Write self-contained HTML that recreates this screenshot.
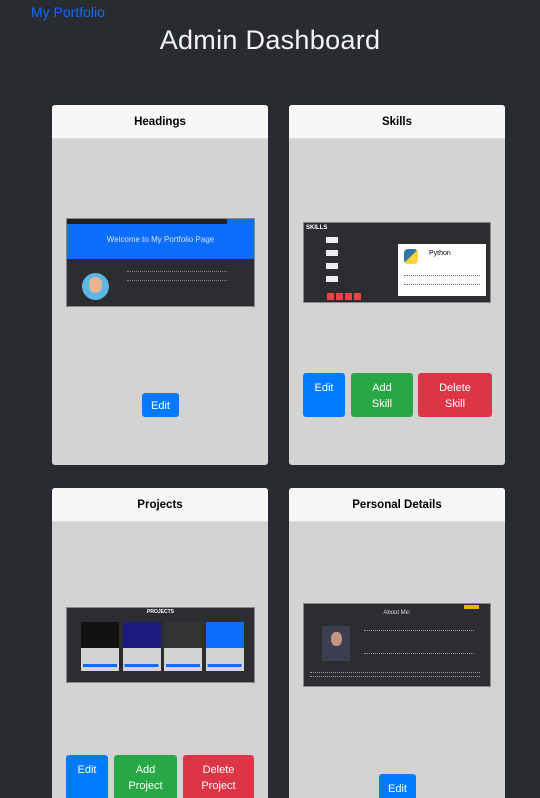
<!DOCTYPE html>
<html><head><style>
*{margin:0;padding:0;box-sizing:border-box}
html,body{width:540px;height:798px;overflow:hidden}
body{background:#282b30;font-family:"Liberation Sans",sans-serif;position:relative}
.a{position:absolute}
.brand{left:31px;top:4px;color:#0d6efd;font-size:14px}
h1{position:absolute;left:0;width:540px;text-align:center;top:25px;color:#f4f4f4;font-size:27px;font-weight:normal;letter-spacing:0.3px}
.card{position:absolute;background:#d3d3d3;border-radius:3px;overflow:hidden}
.hd{height:34px;background:#f7f7f7;border-bottom:1px solid #ddd;text-align:center;font-size:11.5px;font-weight:bold;line-height:35px;color:#000}
.btn{position:absolute;color:#fff;font-size:11px;text-align:center;border-radius:3px;line-height:16px;padding-top:7px}
.b{background:#007bff}.g{background:#28a745}.r{background:#dc3545}
.shot{position:absolute;background:#2b2d31;border:1px solid #888}
</style></head><body>
<div class="a brand">My Portfolio</div>
<h1>Admin Dashboard</h1>

<div class="card" style="left:52px;top:105px;width:216px;height:360px"><div class="hd">Headings</div></div>
<div class="shot" style="left:66px;top:218px;width:189px;height:89px">
 <div class="a" style="left:0;top:0;width:187px;height:5px;background:#222"></div>
 <div class="a" style="left:160px;top:0;width:27px;height:5px;background:#0d6efd"></div>
 <div class="a" style="left:0;top:5px;width:187px;height:35px;background:#0d6efd;color:#cfe0ff;font-size:8px;text-align:center;padding-top:11px">Welcome to My Portfolio Page</div>
 <div class="a" style="left:15px;top:54px;width:27px;height:27px;border-radius:50%;background:#5bb8e6"></div>
 <div class="a" style="left:22px;top:58px;width:13px;height:16px;border-radius:45%;background:#e8b490"></div>
 <div class="a" style="left:60px;top:52px;width:100px;height:10px;border-top:1px dotted #888;border-bottom:1px dotted #888"></div>
</div>
<div class="btn b" style="left:142px;top:393px;width:37px;height:24px;padding-top:5px">Edit</div>

<div class="card" style="left:289px;top:105px;width:216px;height:360px"><div class="hd">Skills</div></div>
<div class="shot" style="left:303px;top:222px;width:188px;height:81px">
 <div class="a" style="left:2px;top:2px;color:#fff;font-size:6px;font-weight:bold">SKILLS</div>
 <div class="a" style="left:22px;top:10px;width:12px;height:50px;background:repeating-linear-gradient(#2b2d31 0 4px,#eee 4px 10px,#2b2d31 10px 13px)"></div>
 <div class="a" style="left:94px;top:21px;width:88px;height:52px;background:#fff"></div>
 <div class="a" style="left:100px;top:26px;width:14px;height:15px;background:linear-gradient(135deg,#3776ab 50%,#ffd43b 50%);border-radius:4px"></div>
 <div class="a" style="left:125px;top:27px;font-size:7px;color:#000">Python</div>
 <div class="a" style="left:100px;top:52px;width:76px;height:10px;border-top:1px dotted #666;border-bottom:1px dotted #666"></div>
 <div class="a" style="left:23px;top:70px;width:36px;height:7px;background:repeating-linear-gradient(90deg,#e44 0 7px,#2b2d31 7px 9px)"></div>
</div>
<div class="btn b" style="left:303px;top:373px;width:42px;height:44px">Edit</div>
<div class="btn g" style="left:351px;top:373px;width:62px;height:44px">Add<br>Skill</div>
<div class="btn r" style="left:418px;top:373px;width:74px;height:44px">Delete<br>Skill</div>

<div class="card" style="left:52px;top:488px;width:216px;height:320px"><div class="hd">Projects</div></div>
<div class="shot" style="left:66px;top:607px;width:189px;height:76px">
 <div class="a" style="left:0;width:187px;top:1px;text-align:center;color:#fff;font-size:5px;font-weight:bold">PROJECTS</div>
 <div class="a" style="left:14px;top:14px;width:38px;height:49px;background:#d3d3d3;border-top:26px solid #111"></div>
 <div class="a" style="left:56px;top:14px;width:38px;height:49px;background:#d3d3d3;border-top:26px solid #1c1c80"></div>
 <div class="a" style="left:97px;top:14px;width:38px;height:49px;background:#d3d3d3;border-top:26px solid #333"></div>
 <div class="a" style="left:139px;top:14px;width:38px;height:49px;background:#d3d3d3;border-top:26px solid #0d6efd"></div>
 <div class="a" style="left:16px;top:56px;width:160px;height:3px;background:repeating-linear-gradient(90deg,#0d6efd 0 34px,transparent 34px 41.5px)"></div>
</div>
<div class="btn b" style="left:66px;top:755px;width:42px;height:50px">Edit</div>
<div class="btn g" style="left:114px;top:755px;width:63px;height:50px">Add<br>Project</div>
<div class="btn r" style="left:183px;top:755px;width:71px;height:50px">Delete<br>Project</div>

<div class="card" style="left:289px;top:488px;width:216px;height:320px"><div class="hd">Personal Details</div></div>
<div class="shot" style="left:303px;top:603px;width:188px;height:84px">
 <div class="a" style="left:160px;top:1px;width:15px;height:4px;background:#f0b400"></div>
 <div class="a" style="left:0;width:186px;top:6px;text-align:center;color:#ddd;font-size:6px">About Me:</div>
 <div class="a" style="left:18px;top:22px;width:28px;height:35px;background:#3a4050"></div>
 <div class="a" style="left:27px;top:28px;width:11px;height:14px;border-radius:45%;background:#c49680"></div>
 <div class="a" style="left:60px;top:26px;width:110px;height:24px;border-top:1px dotted #999;border-bottom:1px dotted #999"></div>
 <div class="a" style="left:6px;top:68px;width:170px;height:5px;border-top:1px dotted #999;border-bottom:1px dotted #999"></div>
</div>
<div class="btn b" style="left:379px;top:774px;width:37px;height:30px;padding-top:7px">Edit</div>
</body></html>
